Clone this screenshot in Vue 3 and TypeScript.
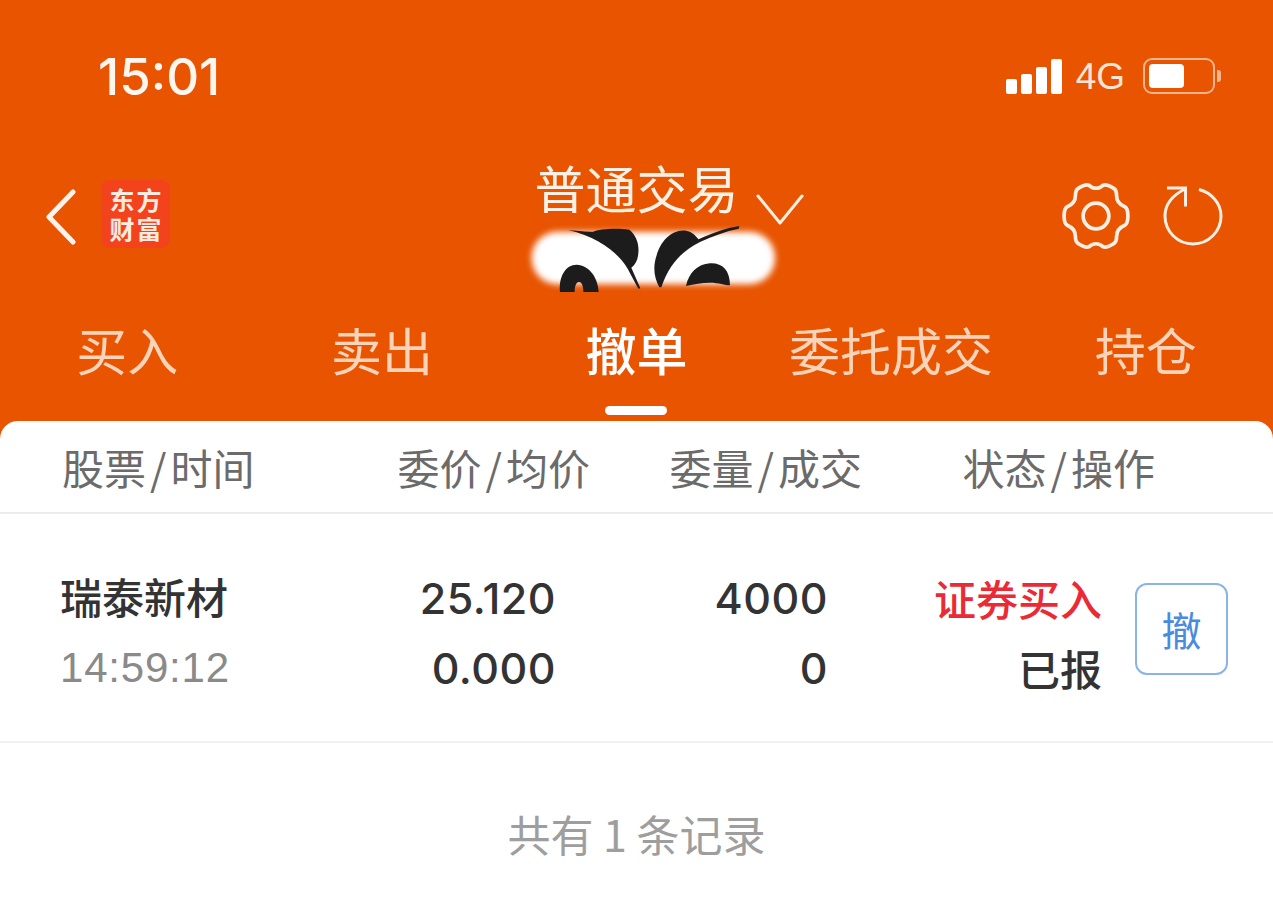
<script setup lang="ts">
const tabs = ['买入', '卖出', '撤单', '委托成交', '持仓']
const active = 2
const columns = [
  ['股票', '时间'],
  ['委价', '均价'],
  ['委量', '成交'],
  ['状态', '操作'],
]
</script>

<template>
  <div class="page">
    <header class="top">
      <div class="status">
        <span class="time">15:01</span>
        <div class="status-right">
          <div class="signal"><i class="b1"></i><i class="b2"></i><i class="b3"></i><i class="b4"></i></div>
          <span class="net">4G</span>
          <div class="battery"><div class="level"></div></div>
          <div class="cap"></div>
        </div>
      </div>

      <div class="nav">
        <div class="nav-left">
          <svg class="back" width="34" height="56" viewBox="0 0 34 56" fill="none">
            <path d="M29 3 5 28l24 25" stroke="#fdf3ea" stroke-width="5" stroke-linecap="round" stroke-linejoin="round" />
          </svg>
          <div class="logo"><span>东方</span><span>财富</span></div>
        </div>
        <div class="nav-title">
          <div class="title-row">
            <span class="title">普通交易</span>
            <svg class="chev" width="48" height="34" viewBox="0 0 48 34" fill="none">
              <path d="M2 3l22 27L46 3" stroke="#fdeee0" stroke-width="3" stroke-linecap="round" stroke-linejoin="round" />
            </svg>
          </div>
          <svg class="mask" width="270" height="72" viewBox="60 216 810 216">
            <defs>
              <filter id="soft" x="-10%" y="-30%" width="120%" height="160%"><feGaussianBlur stdDeviation="10" /></filter>
              <filter id="soft2" x="-10%" y="-10%" width="120%" height="120%"><feGaussianBlur stdDeviation="2" /></filter>
            </defs>
            <rect x="95" y="245" width="730" height="158" rx="78" fill="#fff" filter="url(#soft)" />
            <g filter="url(#soft2)" fill="#1f1d1c">
              <path d="M205 240c25 2 50 6 75 5 15-8 70-12 108-6 20 15 32 45 26 78-2 14-8 26-20 36l27 62-6 1-32-60c-30-50-90-95-178-116Z" />
              <path d="M478 412c-16-28-20-62-8-96 12-44 48-80 88-74 16 2 28 14 38 26 40-18 80-34 122-40l-2 8c-40 8-76 22-116 40-50 26-90 60-116 136Z" />
              <path fill-rule="evenodd" d="M180 426c-4-46 16-82 50-82 38 2 64 38 66 82H250c0-16-4-30-13-30s-13 14-13 30H180Z" />
              <path d="M558 408c8-38 34-66 72-68 36-2 60 20 60 66-16 0-34-8-60-8-26 0-46 4-72 10Z" />
            </g>
          </svg>
        </div>
        <div class="nav-right">
          <svg width="72" height="72" viewBox="0 0 70 70" fill="none" stroke="#fbeee3" stroke-width="3.6">
            <path d="M28 5c4 4 10 4 14 0 3-1 7 1 10 3 2 1 3 4 3 7 0 5 3 9 8 11 2 1 3 3 3 9s-1 8-3 9c-5 2-8 6-8 11 0 3-1 6-3 7-3 2-7 4-10 3-4-4-10-4-14 0-3 1-7-1-10-3-2-1-3-4-3-7 0-5-3-9-8-11-2-1-3-3-3-9s1-8 3-9c5-2 8-6 8-11 0-3 1-6 3-7 3-2 7-4 10-3Z" />
            <circle cx="35" cy="35" r="12.500" />
          </svg>
          <svg width="60" height="60" viewBox="0 0 60 60" fill="none" stroke="#fbeee3" stroke-width="3">
            <path d="M36 3.500C48 6.500 58 17 58 30c0 15.500-12.500 28-28 28S2 45.500 2 30C2 18.500 10 9 22 3" />
            <path d="M4 2h18.500v18.500" />
          </svg>
        </div>
      </div>

      <nav class="tabs">
        <div v-for="(t, i) in tabs" :key="t" class="tab" :class="{ on: i === active }">
          <span>{{ t }}</span>
          <i v-if="i === active" class="bar"></i>
        </div>
      </nav>
    </header>

    <main class="card">
      <div class="head">
        <span v-for="(c, i) in columns" :key="c[0]" :class="{ r: i > 0 }">{{ c[0] }}<span class="sl">/</span>{{ c[1] }}</span>
      </div>

      <div class="row">
        <div class="cell">
          <span class="name">瑞泰新材</span>
          <span class="sub">14:59:12</span>
        </div>
        <div class="cell r num">
          <span>25.120</span>
          <span>0.000</span>
        </div>
        <div class="cell r num">
          <span>4000</span>
          <span>0</span>
        </div>
        <div class="op">
          <div class="cell r state">
            <span class="red">证券买入</span>
            <span>已报</span>
          </div>
          <button class="cancel">撤</button>
        </div>
      </div>

      <p class="foot">共有 1 条记录</p>
    </main>
  </div>
</template>

<style>
html, body { margin: 0; background: #fff; }
</style>

<style scoped>
.page { width: 1273px; height: 905px; overflow: hidden; background: #e85400; font-family: "Noto Sans CJK SC", "Liberation Sans", sans-serif; display: flex; flex-direction: column; }
.top { height: 421px; flex: none; display: flex; flex-direction: column; color: #fdf1e6; }

.status { display: flex; justify-content: space-between; align-items: center; box-sizing: border-box; height: 116px; padding: 36px 52px 0 98px; }
.time { font: 500 51px/1 "Inter", "Liberation Sans", sans-serif; color: #fdf6ef; }
.status-right { display: flex; align-items: center; }
.signal { display: flex; align-items: flex-end; gap: 4px; height: 35px; }
.signal i { display: block; width: 11px; background: #fff; border-radius: 2px; }
.b1 { height: 15px; } .b2 { height: 20px; } .b3 { height: 27px; } .b4 { height: 35px; }
.net { font: 400 37px/1 "Liberation Sans", sans-serif; margin: 0 18px 0 14px; color: #fbe6d6; }
.battery { width: 72px; height: 36px; box-sizing: border-box; border: 2.5px solid #f6b58f; border-radius: 9px; padding: 4px; }
.level { width: 35px; height: 100%; background: #fff; border-radius: 4px; }
.cap { width: 4px; height: 12px; margin-left: 2px; background: #f6b58f; border-radius: 0 3px 3px 0; }

.nav { display: grid; grid-template-columns: 1fr auto 1fr; height: 203px; align-items: start; }
.nav-left { display: flex; align-items: center; padding: 64px 0 0 44px; }
.back { margin-top: 5px; }
.logo { margin-left: 23px; width: 69px; height: 68px; background: #f2431c; border-radius: 9px; display: flex; flex-direction: column; align-items: center; justify-content: center; font: 700 25px/29px "Noto Sans CJK SC", sans-serif; color: #fdeae0; }
.logo span { display: block; letter-spacing: 2px; margin-right: -2px; }
.nav-title { display: flex; flex-direction: column; align-items: flex-start; width: 270px; }
.title-row { display: flex; align-items: flex-start; box-sizing: border-box; height: 106px; padding: 41px 0 0 33px; }
.title { font-size: 51px; line-height: 60px; white-space: nowrap; }
.chev { margin: 36px 0 0 17px; flex: none; }
.mask { margin-left: 18.500px; flex: none; }
.nav-right { display: flex; justify-content: flex-end; align-items: center; gap: 31px; padding: 64px 50px 0 0; }

.tabs { display: grid; grid-template-columns: repeat(5, 1fr); flex: 1; }
.tab { display: flex; flex-direction: column; align-items: center; font-size: 51px; line-height: 60px; color: #fbd3b9; }
.tab.on { color: #fff; font-weight: 500; }
.bar { display: block; width: 62px; height: 9px; border-radius: 5px; background: #fff; margin-top: 27px; }

.card { flex: 1; background: #fff; border-radius: 18px 18px 0 0; color: #2e2e2e; }
.r { text-align: right; }
.head { display: grid; grid-template-columns: 228px 300px 272px 293px; height: 93px; padding-left: 62px; align-items: center; border-bottom: 2px solid #ececec; box-sizing: border-box; font-size: 42px; color: #6b6b6b; }
.sl { margin: 0 4px; }
.row { display: grid; grid-template-columns: 240px 256px 272px 400px; box-sizing: border-box; height: 229px; padding: 49px 0 0 60px; border-bottom: 2px solid #f1f1f1; }
.cell { display: flex; flex-direction: column; font-size: 42px; line-height: 70px; white-space: nowrap; }
.cell.r { align-items: flex-end; }
.name { font-weight: 500; color: #333; margin-top: -2px; margin-bottom: 2px; }
.sub { font-family: "Liberation Sans", sans-serif; font-size: 42px; letter-spacing: 0.8px; color: #8a8a8a; }
.num { font-family: "Inter", "Liberation Sans", sans-serif; font-size: 43px; font-weight: 500; letter-spacing: 0.5px; color: #333; }
.op { display: flex; justify-content: flex-end; align-items: flex-start; gap: 33px; }
.state { color: #333; font-weight: 500; }
.red { color: #ec2a35; }
.cancel { width: 93px; height: 92px; margin-top: 20px; padding: 0; background: #fff; border: 2px solid #8ab4e6; border-radius: 12px; color: #4a8be0; font: 400 40px/1 "Noto Sans CJK SC", sans-serif; }
.foot { margin: 60px 0 0; text-align: center; font-size: 43px; line-height: 60px; color: #9e9e9e; }
</style>
